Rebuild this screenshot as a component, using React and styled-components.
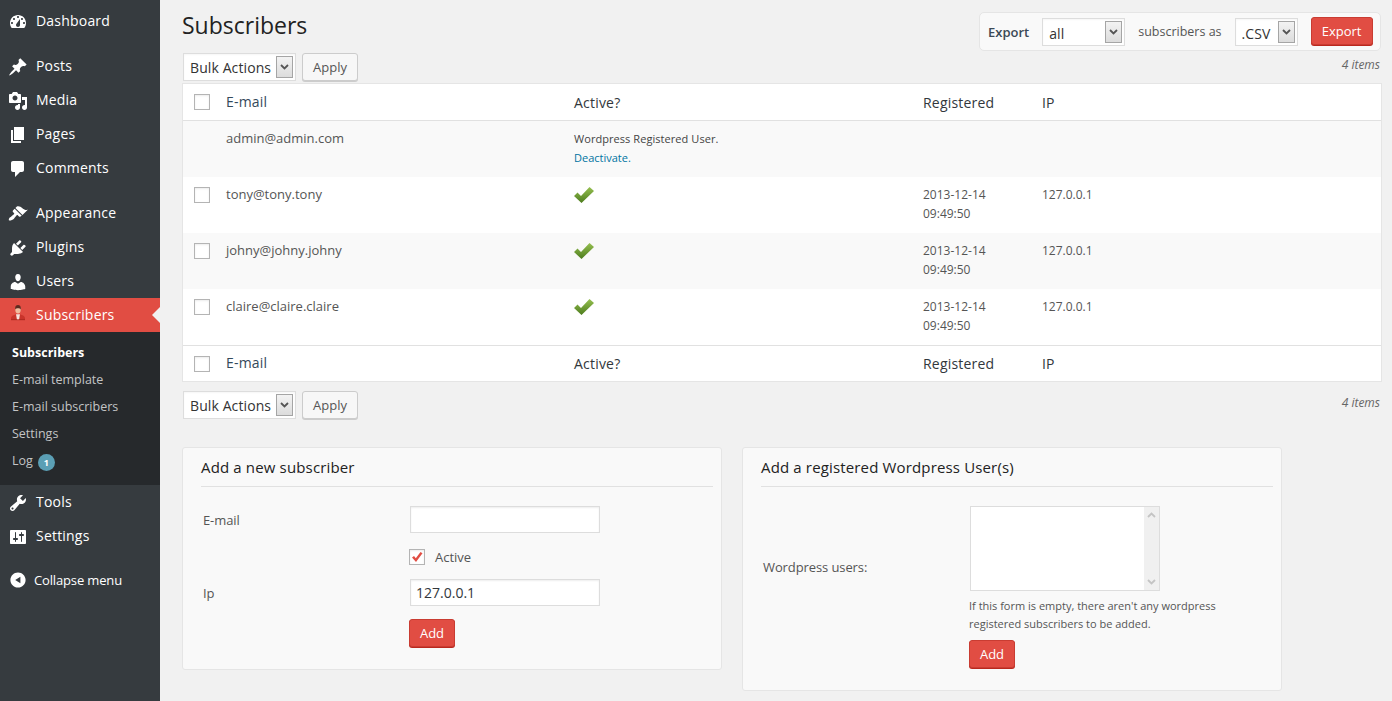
import React from "react";
import styled, { createGlobalStyle } from "styled-components";

const Global = createGlobalStyle`
  html, body { margin: 0; padding: 0; background: #f1f1f1; }
  body { font-family: "Open Sans", "Liberation Sans", sans-serif; color: #444; overflow: hidden; }
  * { box-sizing: border-box; }
`;

const Page = styled.div`display: flex; width: 1392px; height: 701px; overflow: hidden;`;
const Sidebar = styled.nav`width: 160px; flex: none; background: #363b3f; padding-top: 4px;`;
const MenuGroup = styled.div`margin-bottom: ${(p) => p.$gap || 0}px;`;
const MenuItem = styled.div`
  position: relative; display: flex; align-items: center; height: 34px; padding: 0 0 2px 8px;
  font-size: 14px; letter-spacing: .2px; color: #fff; background: ${(p) => (p.$active ? "#e14d43" : "transparent")};
`;
const MenuIcon = styled.span`width: 28px; flex: none; display: flex; align-items: center; svg { display: block; margin-top: 4px; }`;
const Notch = styled.span`
  position: absolute; right: 0; top: 9px; width: 0; height: 0;
  border: 8px solid transparent; border-right-color: #f1f1f1; border-left-width: 0;
`;
const Submenu = styled.div`background: #26292c; padding: 7px 0 11px 12px;`;
const SubItem = styled.div`
  display: flex; align-items: center; height: 27px; font-size: 12.5px;
  color: ${(p) => (p.$current ? "#fff" : "#c3c4c5")}; font-weight: ${(p) => (p.$current ? 700 : 400)};
`;
const Badge = styled.span`
  display: inline-flex; align-items: center; justify-content: center; width: 17px; height: 17px;
  margin: 3px 0 0 5px; border-radius: 50%; background: #5b9fb5; color: #fff; font-size: 9px; font-weight: 700;
`;
const Collapse = styled.div`display: flex; align-items: center; height: 34px; margin-top: 10px; padding-left: 10px; font-size: 13px; letter-spacing: -.15px; color: #fff; gap: 8px; svg { display: block; }`;

const Main = styled.main`flex: 1; min-width: 0; padding: 12px 10px 0 22px;`;
const Header = styled.header`display: flex; justify-content: space-between; align-items: flex-start; height: 41px;`;
const Title = styled.h1`margin: -1px 0 0; font-size: 23px; font-weight: 400; line-height: 29px; color: #222;`;
const ExportBox = styled.div`
  display: flex; align-items: center; width: 402px; height: 39px; margin-right: 1px; padding-left: 8px;
  background: #f9f9f9; border: 1px solid #e5e5e5; border-radius: 5px; font-size: 13px; color: #444;
`;
const ExportLabel = styled.span`font-weight: 600; margin-right: 13px; color: #3c4a56;`;
const ExportText = styled.span`margin: 0 13px; font-size: 12.5px; color: #555;`;

const SelectBox = styled.div`
  display: flex; align-items: center; justify-content: space-between; width: ${(p) => p.$w}px; height: 28px;
  margin-top: ${(p) => p.$top || 0}px; padding: 0 2px 0 6px; background: #fff; border: 1px solid #ddd; font-size: 14px; color: #333;
  box-shadow: inset 0 1px 2px rgba(0,0,0,.04); flex: none;
`;
const SelectValue = styled.span`padding-top: ${(p) => p.$low || 0}px; letter-spacing: .1px;`;
const SelectArrow = styled.span`
  display: flex; align-items: center; justify-content: center; width: 17px; height: 22px;
  background: linear-gradient(#f3f3f3, #dcdcdc); border: 1px solid #a5a5a5;
`;
const Button = styled.button`
  font: 13px "Open Sans", "Liberation Sans", sans-serif; height: 28px; width: ${(p) => p.$w}px; padding: 0;
  border-radius: 3px; flex: none;
  ${(p) => p.$red
    ? "background:#e14d43;border:1px solid #c93c32;color:#fff;box-shadow:0 1px 0 #ba281e;"
    : "background:#f7f7f7;border:1px solid #ccc;color:#555;box-shadow:0 1px 0 #ccc;"}
`;
const ExportButton = styled(Button)`margin-left: 13px; margin-bottom: 2px;`;

const BulkBar = styled.div`display: flex; align-items: center; height: 28px; margin-top: ${(p) => p.$top || 0}px; padding-left: 1px; gap: 6px;`;
const ItemCount = styled.span`margin-left: auto; margin-right: 2px; margin-bottom: 5px; font-size: 12px; font-style: italic; color: #666;`;

const Table = styled.div`margin-top: 2px; background: #fff; border: 1px solid #e5e5e5;`;
const Row = styled.div`
  display: grid; grid-template-columns: 43px 348px 349px 119px 1fr; height: ${(p) => p.$h || 56}px;
  background: ${(p) => (p.$alt ? "#f9f9f9" : "#fff")}; font-size: 13px; color: #555;
  ${(p) => p.$borderTop && "border-top: 1px solid #e1e1e1;"}
  ${(p) => p.$borderBottom && "border-bottom: 1px solid #e1e1e1;"}
`;
const HeadRow = styled(Row)`align-items: center; font-size: 14px; letter-spacing: .2px; color: #32373c;`;
const HeadCell = styled.div`color: ${(p) => (p.$link ? "#34495a" : "inherit")}; margin-top: ${(p) => (p.$link ? -2 : 0)}px;`;
const Cell = styled.div`padding-top: 8px; line-height: 19px; font-size: ${(p) => p.$fs || 12}px;`;
const Note = styled.div`font-size: 11px; font-weight: 500; letter-spacing: .06px; color: #444; line-height: 19px;`;
const Link = styled.a`color: #0074a2; font-size: 11px; font-weight: 500;`;
const CheckCell = styled.div`padding-left: 11px; display: flex; align-items: ${(p) => (p.$head ? "center" : "flex-start")}; padding-top: ${(p) => (p.$head ? 0 : 10)}px;`;
const Check = styled.span`
  display: inline-flex; align-items: center; justify-content: center; width: 16px; height: 16px;
  background: #fff; border: 1px solid #b4b4b4; box-shadow: inset 0 1px 2px rgba(0,0,0,.08); flex: none;
`;
const CheckMark = styled.svg`display: block; margin-top: 2px;`;

const Panels = styled.div`display: flex; align-items: flex-start; gap: 20px; margin-top: 28px;`;
const Panel = styled.section`
  width: 540px; flex: none; height: ${(p) => p.$h}px; background: #f9f9f9; border: 1px solid #e5e5e5; border-radius: 3px;
  padding: 0 8px 0 18px;
`;
const PanelTitle = styled.h3`
  margin: 0; height: 39px; padding-top: 8px; font-size: 15px; letter-spacing: .15px; line-height: 22px; font-weight: 500; color: #222;
  border-bottom: 1px solid #e1e1e1;
`;
const FormRow = styled.div`
  display: grid; grid-template-columns: 208px 1fr; align-items: ${(p) => p.$align || "center"}; margin-top: ${(p) => p.$top}px;
`;
const FormLabel = styled.label`padding-left: 2px; padding-top: ${(p) => p.$top || 0}px; font-size: 13px; letter-spacing: -.1px; color: #555;`;
const FormField = styled.div`display: flex; flex-direction: column; align-items: flex-start; font-size: 13px; color: #555;`;
const Input = styled.div`
  width: 190px; height: 27px; margin-left: 1px; padding-left: 5px; background: #fff; border: 1px solid #ddd;
  box-shadow: inset 0 1px 2px rgba(0,0,0,.07); font-size: 14px; line-height: 25px; color: #32373c;
`;
const CheckLine = styled.div`display: flex; align-items: center; gap: 10px;`;
const Textarea = styled.div`
  display: flex; justify-content: flex-end; width: 190px; height: 85px; margin-left: 1px; background: #fff; border: 1px solid #ddd;
`;
const Scroll = styled.div`
  width: 15px; background: #f0f0f0; display: flex; flex-direction: column; justify-content: space-between; align-items: center; padding: 5px 0;
  svg { display: block; }
`;
const Help = styled.p`margin: 6px 0 7px; font-size: 11px; line-height: 18px; color: #555; width: 270px;`;

const W = ({ d, size = 20 }) => (
  <svg width={size} height={size} viewBox="0 0 20 20" fill="#fff"><path fillRule="evenodd" d={d} /></svg>
);

const icons = {
  dashboard: "M3.76 16h12.48c1.1-1.37 1.76-3.11 1.76-5 0-4.42-3.58-8-8-8s-8 3.58-8 8c0 1.89.66 3.63 1.76 5zM10 4c.55 0 1 .45 1 1s-.45 1-1 1-1-.45-1-1 .45-1 1-1zM6 6c.55 0 1 .45 1 1s-.45 1-1 1-1-.45-1-1 .45-1 1-1zm8 0c.55 0 1 .45 1 1s-.45 1-1 1-1-.45-1-1 .45-1 1-1zm-5.37 5.55L12 7v6c0 1.1-.9 2-2 2s-2-.9-2-2c0-.57.24-1.08.63-1.45zM4 10c.55 0 1 .45 1 1s-.45 1-1 1-1-.45-1-1 .45-1 1-1zm12 0c.55 0 1 .45 1 1s-.45 1-1 1-1-.45-1-1 .45-1 1-1z",
  post: "M10.44 3.02l1.82-1.82 6.36 6.35-1.83 1.82c-1.05-.68-2.48-.57-3.41.36l-.75.75c-.92.93-1.04 2.35-.35 3.41l-1.83 1.82-2.41-2.41-2.8 2.79c-.42.42-3.38 2.71-3.8 2.29s1.86-3.39 2.28-3.81l2.79-2.79L4.1 9.36l1.83-1.82c1.05.69 2.48.57 3.41-.36l.75-.75c.93-.92 1.05-2.35.35-3.41z",
  media: "M13 11V4c0-.55-.45-1-1-1h-1.67L9 1H5L3.67 3H2c-.55 0-1 .45-1 1v7c0 .55.45 1 1 1h10c.55 0 1-.45 1-1zM7 4.5c1.38 0 2.5 1.12 2.5 2.5S8.38 9.5 7 9.5 4.5 8.38 4.5 7 5.62 4.5 7 4.5zM14 6h5v10.5c0 1.38-1.12 2.5-2.5 2.5S14 17.88 14 16.5s1.12-2.5 2.5-2.5c.17 0 .34.02.5.05V9h-3V6zm-4 8.05V13h2v3.5c0 1.38-1.12 2.5-2.5 2.5S7 17.88 7 16.5 8.12 14 9.5 14c.17 0 .34.02.5.05z",
  pages: "M6 15V2h10v13H6zm-1 1h8v2H3V5h2v11z",
  comments: "M5 2h9c1.1 0 2 .9 2 2v7c0 1.1-.9 2-2 2h-2l-5 5v-5H5c-1.1 0-2-.9-2-2V4c0-1.1.9-2 2-2z",
  appearance: "M14.48 11.06L7.41 3.99l1.5-1.5c.5-.56 2.3-.47 3.51.32 1.21.8 1.43 1.28 2.91 2.1 1.18.64 2.45 1.26 4.45.85zm-.71.71L6.7 4.7 4.93 6.47c-.39.39-.39 1.02 0 1.41l1.06 1.06c.39.39.39 1.03 0 1.42-.6.6-1.43 1.11-2.21 1.69-.35.26-.7.53-1.01.84C1.43 12.73.4 15.75 1.02 16.37c.63.63 3.64-.41 4.97-1.74.31-.31.58-.66.85-1.01.58-.78 1.09-1.61 1.69-2.21.39-.39 1.02-.39 1.41 0l1.06 1.06c.39.39 1.02.39 1.41 0z",
  plugins: "M13.11 4.36L9.87 7.6 8 5.73l3.24-3.24c.35-.34 1.05-.2 1.56.32.52.51.66 1.21.31 1.55zm-8 1.77l.91-1.12 9.01 9.01-1.19.84c-.71.71-2.63 1.16-3.82 1.16H6.14L4.9 17.26c-.59.59-1.54.59-2.12 0-.59-.58-.59-1.53 0-2.12l1.24-1.24v-3.88c0-1.13.4-3.19 1.09-3.89zm7.26 3.97l3.24-3.24c.34-.35 1.04-.21 1.55.31.52.51.66 1.21.31 1.55l-3.24 3.25z",
  users: "M10 9.25c-2.27 0-2.73-3.44-2.73-3.44C7 4.02 7.82 2 9.97 2c2.16 0 2.98 2.02 2.71 3.81 0 0-.41 3.44-2.68 3.44zm0 2.57L12.72 10c2.39 0 4.52 2.33 4.52 4.53v2.49s-3.65 1.13-7.24 1.13c-3.65 0-7.24-1.13-7.24-1.13v-2.49c0-2.25 1.94-4.48 4.47-4.48z",
  tools: "M16.68 9.77c-1.34 1.34-3.3 1.67-4.95.99l-5.41 6.52c-.99.99-2.59.99-3.58 0s-.99-2.59 0-3.57l6.52-5.42c-.68-1.65-.35-3.61.99-4.95 1.28-1.28 3.12-1.62 4.72-1.06l-2.89 2.89 2.82 2.82 2.86-2.87c.53 1.58.18 3.39-1.08 4.65zM3.81 16.21c.4.39 1.04.39 1.43 0 .4-.4.4-1.04 0-1.43-.39-.4-1.03-.4-1.43 0-.39.39-.39 1.03 0 1.43z",
  settings: "M18 16V4c0-.55-.45-1-1-1H3c-.55 0-1 .45-1 1v12c0 .55.45 1 1 1h14c.55 0 1-.45 1-1zM8 11h1c.55 0 1 .45 1 1s-.45 1-1 1H8v1.5c0 .28-.22.5-.5.5s-.5-.22-.5-.5V13H6c-.55 0-1-.45-1-1s.45-1 1-1h1V5.5c0-.28.22-.5.5-.5s.5.22.5.5V11zm5-2h-1c-.55 0-1-.45-1-1s.45-1 1-1h1V5.5c0-.28.22-.5.5-.5s.5.22.5.5V7h1c.55 0 1 .45 1 1s-.45 1-1 1h-1v5.5c0 .28-.22.5-.5.5s-.5-.22-.5-.5V9z",
  collapse: "M10 .5c5.25 0 9.5 4.25 9.5 9.5s-4.25 9.5-9.5 9.5S.5 15.25.5 10 4.75.5 10 .5zM13 14V6l-6.5 4z",
};

const PersonSvg = styled.svg`&& { margin-top: 0; }`;

const PersonIcon = () => (
  <PersonSvg width="20" height="20" viewBox="0 0 20 20">
    <path d="M3 16v-1.800c0-1.500 1-2.500 2.500-3L8 10.300h4l2.500.9c1.500.5 2.500 1.500 2.500 3V16z" fill="#c9342b" />
    <path d="M8 10.300h4L11 16H9z" fill="#f6e4df" />
    <path d="M3 15.200h14V16.200H3z" fill="#a8281f" opacity=".85" />
    <ellipse cx="10" cy="5.800" rx="2.700" ry="3.700" fill="#f0bd9f" />
    <path d="M7.200 5.500C6.700 2.400 8.200 1 10 1s3.300 1.400 2.800 4.500c-.8-1.600-4.800-1.600-5.600 0z" fill="#5e2b20" />
  </PersonSvg>
);

const GreenCheck = () => (
  <CheckMark width="20" height="16" viewBox="0 0 20 16">
    <defs>
      <linearGradient id="gc" x1="0" y1="0" x2="0" y2="1">
        <stop offset="0" stopColor="#96c050" /><stop offset="1" stopColor="#4d7c1e" />
      </linearGradient>
    </defs>
    <path d="M0 9l3.500-3.500L7 9 15.500 0 20 4 7.500 16z" fill="url(#gc)" />
  </CheckMark>
);

const RedCheck = () => (
  <svg width="12" height="12" viewBox="0 0 12 12"><path d="M1 6.500l2-1.500 1.800 2.200L9.500 1l2 1.200L5 11z" fill="#e14d43" /></svg>
);

const Chevron = ({ up, color = "#555" }) => (
  <svg width="9" height="6" viewBox="0 0 9 6"><path d={up ? "M1 5l3.500-3.500L8 5" : "M1 1l3.500 3.500L8 1"} fill="none" stroke={color} strokeWidth="1.800" /></svg>
);

const Select = ({ w, top, low, children }) => (
  <SelectBox $w={w} $top={top}><SelectValue $low={low}>{children}</SelectValue><SelectArrow><Chevron /></SelectArrow></SelectBox>
);

const Bulk = ({ top }) => (
  <BulkBar $top={top}>
    <Select w={113}>Bulk Actions</Select>
    <Button $w={56}>Apply</Button>
    <ItemCount>4 items</ItemCount>
  </BulkBar>
);

const Item = ({ icon, label, active }) => (
  <MenuItem $active={active}>
    <MenuIcon>{icon === "person" ? <PersonIcon /> : <W d={icons[icon]} />}</MenuIcon>
    {label}
    {active && <Notch />}
  </MenuItem>
);

const rows = ["tony@tony.tony", "johny@johny.johny", "claire@claire.claire"];

const TableHead = ({ h = 37, ...p }) => (
  <HeadRow $h={h} {...p}>
    <CheckCell $head><Check /></CheckCell>
    <HeadCell $link>E-mail</HeadCell>
    <HeadCell>Active?</HeadCell>
    <HeadCell>Registered</HeadCell>
    <HeadCell>IP</HeadCell>
  </HeadRow>
);

export default function App() {
  return (
    <Page>
      <Global />
      <Sidebar>
        <MenuGroup $gap={11}><Item icon="dashboard" label="Dashboard" /></MenuGroup>
        <MenuGroup $gap={11}>
          <Item icon="post" label="Posts" />
          <Item icon="media" label="Media" />
          <Item icon="pages" label="Pages" />
          <Item icon="comments" label="Comments" />
        </MenuGroup>
        <MenuGroup>
          <Item icon="appearance" label="Appearance" />
          <Item icon="plugins" label="Plugins" />
          <Item icon="users" label="Users" />
          <Item icon="person" label="Subscribers" active />
          <Submenu>
            <SubItem $current>Subscribers</SubItem>
            <SubItem>E-mail template</SubItem>
            <SubItem>E-mail subscribers</SubItem>
            <SubItem>Settings</SubItem>
            <SubItem>Log <Badge>1</Badge></SubItem>
          </Submenu>
          <Item icon="tools" label="Tools" />
          <Item icon="settings" label="Settings" />
        </MenuGroup>
        <Collapse><W d={icons.collapse} size={16} />Collapse menu</Collapse>
      </Sidebar>

      <Main>
        <Header>
          <Title>Subscribers</Title>
          <ExportBox>
            <ExportLabel>Export</ExportLabel>
            <Select w={83} top={1} low={2}>all</Select>
            <ExportText>subscribers as</ExportText>
            <Select w={63} top={1} low={2}>.CSV</Select>
            <ExportButton $red $w={62}>Export</ExportButton>
          </ExportBox>
        </Header>
        <Bulk />
        <Table>
          <TableHead $borderBottom />
          <Row $alt>
            <div />
            <Cell $fs={13}>admin@admin.com</Cell>
            <Cell>
              <Note>Wordpress Registered User.</Note>
              <Link>Deactivate.</Link>
            </Cell>
            <div /><div />
          </Row>
          {rows.map((email, i) => (
            <Row key={email} $alt={i === 1}>
              <CheckCell><Check /></CheckCell>
              <Cell $fs={13}>{email}</Cell>
              <Cell><GreenCheck /></Cell>
              <Cell>2013-12-14<br />09:49:50</Cell>
              <Cell>127.0.0.1</Cell>
            </Row>
          ))}
          <TableHead h={36} $borderTop />
        </Table>
        <Bulk top={9} />
        <Panels>
          <Panel $h={223}>
            <PanelTitle>Add a new subscriber</PanelTitle>
            <FormRow $top={19}>
              <FormLabel>E-mail</FormLabel>
              <FormField><Input /></FormField>
            </FormRow>
            <FormRow $top={15}>
              <span />
              <FormField>
                <CheckLine><Check><RedCheck /></Check>Active</CheckLine>
              </FormField>
            </FormRow>
            <FormRow $top={13}>
              <FormLabel>Ip</FormLabel>
              <FormField><Input>127.0.0.1</Input></FormField>
            </FormRow>
            <FormRow $top={13}>
              <span />
              <FormField><Button $red $w={46}>Add</Button></FormField>
            </FormRow>
          </Panel>
          <Panel $h={244}>
            <PanelTitle>Add a registered Wordpress User(s)</PanelTitle>
            <FormRow $top={19} $align="start">
              <FormLabel $top={52}>Wordpress users:</FormLabel>
              <FormField>
                <Textarea>
                  <Scroll><Chevron up color="#c4c4c4" /><Chevron color="#c4c4c4" /></Scroll>
                </Textarea>
                <Help>If this form is empty, there aren't any wordpress registered subscribers to be added.</Help>
                <Button $red $w={46}>Add</Button>
              </FormField>
            </FormRow>
          </Panel>
        </Panels>
      </Main>
    </Page>
  );
}
